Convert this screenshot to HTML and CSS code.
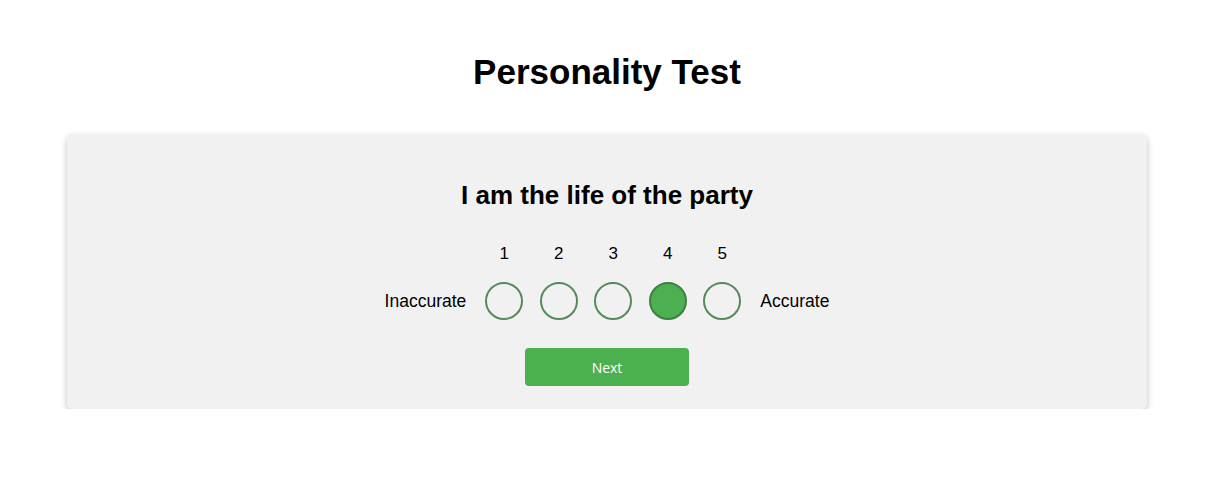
FILE: index.html
```html
<!DOCTYPE html>
<html lang="en">
<head>
<meta charset="utf-8">
<title>Personality Test</title>
<link rel="stylesheet" href="styles.css">
</head>
<body>
<main class="page">
  <h1 class="title">Personality Test</h1>
  <section class="card">
    <h2 class="question">I am the life of the party</h2>
    <div class="scale">
      <span class="label label-left">Inaccurate</span>
      <div class="options">
        <div class="option"><span class="num">1</span><span class="circle"></span></div>
        <div class="option"><span class="num">2</span><span class="circle"></span></div>
        <div class="option"><span class="num">3</span><span class="circle"></span></div>
        <div class="option"><span class="num">4</span><span class="circle selected"></span></div>
        <div class="option"><span class="num">5</span><span class="circle"></span></div>
      </div>
      <span class="label label-right">Accurate</span>
    </div>
    <button class="next" type="button">Next</button>
  </section>
</main>
</body>
</html>
```

FILE: styles.css
```css
html, body {
  margin: 0;
  padding: 0;
  background: #ffffff;
}

body {
  font-family: "Liberation Sans", Arial, sans-serif;
  font-size: 17px;
  color: #000;
}

.page {
  padding: 0 77px 0 67px;
}

.title {
  margin: 52px 0 44px;
  font-size: 35px;
  font-weight: bold;
  text-align: center;
  line-height: 39px;
}

.card {
  background: #f1f1f1;
  border-radius: 5px;
  box-shadow: 0 2px 6px rgba(0, 0, 0, 0.26);
  padding: 45px 20px 23px;
  display: flex;
  flex-direction: column;
  align-items: center;
}

.question {
  margin: 0 0 34px;
  font-size: 26px;
  font-weight: bold;
  line-height: 30px;
}

.scale {
  display: flex;
  align-items: flex-end;
}

.label {
  font-size: 17.5px;
  line-height: 38px;
  height: 38px;
}

.label-left {
  margin-right: 19px;
}

.label-right {
  margin-left: 19px;
}

.options {
  display: flex;
  gap: 16.5px;
}

.option {
  display: flex;
  flex-direction: column;
  align-items: center;
  width: 38px;
}

.num {
  line-height: 20px;
  margin-bottom: 18px;
}

.circle {
  box-sizing: border-box;
  width: 38px;
  height: 38px;
  border-radius: 50%;
  border: 2px solid #578a5b;
  background: transparent;
}

.circle.selected {
  background: #4caf50;
  border-color: #3f7f43;
}

.next {
  margin-top: 28px;
  width: 164px;
  height: 38px;
  border: none;
  border-radius: 4px;
  background: #4caf50;
  color: #ffffff;
  font-family: "Open Sans", "Noto Sans", sans-serif;
  font-size: 14px;
  cursor: pointer;
}
```
